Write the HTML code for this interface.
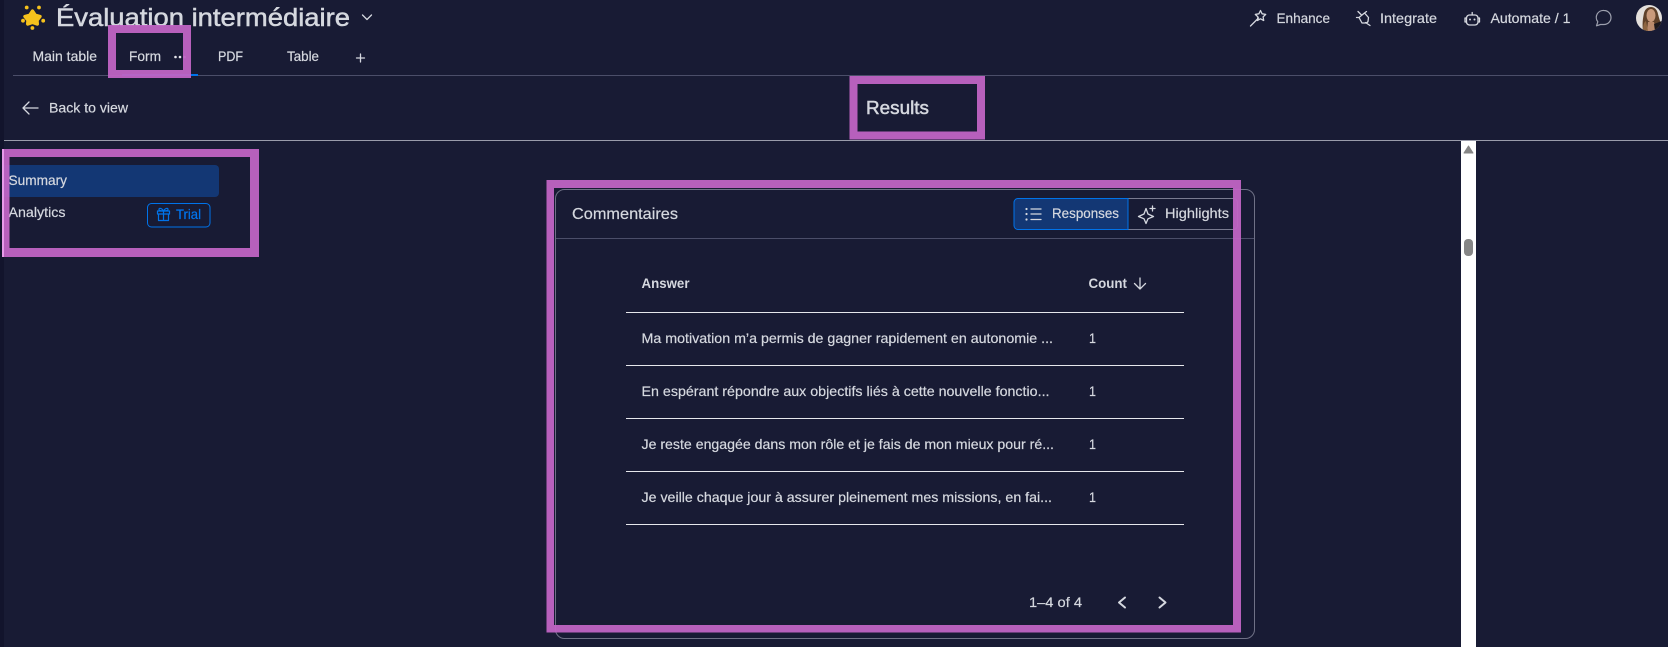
<!DOCTYPE html>
<html lang="fr">
<head>
<meta charset="utf-8">
<title>Results</title>
<style>
html,body{margin:0;padding:0;width:1668px;height:647px;overflow:hidden;background:#181b34}
svg{display:block}
text{font-family:"Liberation Sans",sans-serif;fill:#d5d8df;font-size:14px;stroke:#d5d8df;stroke-width:.2}
.i{fill:none;stroke:#d5d8df;stroke-width:1.3;stroke-linecap:round;stroke-linejoin:round}
.l{fill:#e6e7ec}
.p{fill:#c064c4;opacity:.95;fill-rule:evenodd}
</style>
</head>
<body>
<svg xmlns="http://www.w3.org/2000/svg" width="1668" height="647" viewBox="0 0 1668 647">
<rect width="1668" height="647" fill="#181b34"/>
<rect x="0" y="0" width="4" height="647" fill="#12142c"/>

<!-- star -->
<polygon points="32.5,11 35.3,15.3 40,16.5 37,20.3 37.3,24 32.5,22.4 27.7,24 28,20.3 25,16.5 29.700,15.3" fill="#f6c21c" stroke="#f6c21c" stroke-width="3.4" stroke-linejoin="round"/>
<circle cx="26.7" cy="7.5" r="1.9" fill="#f6c21c"/><circle cx="39" cy="7.5" r="1.9" fill="#f6c21c"/>
<circle cx="23" cy="20.7" r="1.9" fill="#f6c21c"/><circle cx="43.2" cy="20.7" r="1.9" fill="#f6c21c"/><circle cx="32.4" cy="28" r="1.9" fill="#f6c21c"/>

<!-- title -->
<text x="56" y="26" style="font-size:25px;stroke-width:.5" textLength="294" lengthAdjust="spacingAndGlyphs">Évaluation intermédiaire</text>
<path class="i" d="M362.500 15l4.500 4.500 4.500-4.500"/>

<!-- tabs -->
<text x="32.500" y="61" textLength="64.500" lengthAdjust="spacingAndGlyphs">Main table</text>
<text x="129" y="61" textLength="32" lengthAdjust="spacingAndGlyphs">Form</text>
<circle cx="175.500" cy="57" r="1.300" fill="#e6e7ec"/><circle cx="180" cy="57" r="1.300" fill="#e6e7ec"/><circle cx="184.500" cy="57" r="1.300" fill="#e6e7ec"/>
<text x="218" y="61" textLength="25" lengthAdjust="spacingAndGlyphs">PDF</text>
<text x="287" y="61" textLength="32" lengthAdjust="spacingAndGlyphs">Table</text>
<path class="i" d="M356.500 58h8M360.500 54v8"/>
<rect x="13" y="75" width="1655" height="1" fill="#4b4e69"/>
<rect x="122" y="74" width="76" height="2" fill="#0073ea"/>

<!-- right header -->
<path class="i" d="M1250.500 26l8-8M1260.500 10.500l1.600 3.300 3.600.6-2.600 2.500.6 3.600-3.200-1.700-3.200 1.700.6-3.600-2.600-2.500 3.600-.6z"/>
<text x="1276.500" y="23" textLength="53.500" lengthAdjust="spacingAndGlyphs">Enhance</text>
<path class="i" d="M1359 17.500l5.500-4.500 4 4.500-.5 4a3 3 0 0 1-3 1.500h-3zM1366.500 11.500l-2 1.500M1356.500 17.500l2.500 0M1365.500 22.500l4.500 3M1358 11.500l3.500 3.500"/>
<text x="1380" y="23" textLength="57" lengthAdjust="spacingAndGlyphs">Integrate</text>
<rect class="i" x="1466.500" y="15" width="11.500" height="10" rx="3"/>
<path class="i" d="M1472.200 15v-2.500M1466.500 18h-1.500v4h1.500M1478 18h1.500v4h-1.500"/>
<circle cx="1470" cy="19.500" r="1" fill="#d5d8df"/><circle cx="1474.500" cy="19.500" r="1" fill="#d5d8df"/>
<text x="1490.500" y="23" textLength="80" lengthAdjust="spacingAndGlyphs">Automate / 1</text>
<path d="M1604 10.500a7 7 0 0 1 0 14h-3.500l-4 1.300 1.300-4a7 7 0 0 1 6.200-11.300z" fill="none" stroke="#9da0ae" stroke-width="1.200" stroke-linejoin="round"/>

<!-- avatar -->
<defs><clipPath id="av"><circle cx="1649" cy="18" r="13"/></clipPath></defs>
<g clip-path="url(#av)">
<rect x="1636" y="5" width="26" height="26" fill="#e4e0dc"/>
<path d="M1643 31c-1-8 0-13 1-18 1-4 4-6 7-6s6 2 7 7c1 4 2 8 4 11v6z" fill="#5f4129"/>
<ellipse cx="1651" cy="15.500" rx="4.500" ry="6.500" fill="#c99a7b"/>
<path d="M1648 22h6l2 9h-9z" fill="#b98a6c"/>
<path d="M1654 24l8-3v10h-7z" fill="#1c181c"/>
<path d="M1643 31c0-6 1-9 3-10l2 10z" fill="#8d6540"/>
</g>

<!-- back row -->
<path class="i" d="M38 108H23M29 102l-6 6 6 6" stroke-width="1.500"/>
<text x="49" y="112.500" textLength="79" lengthAdjust="spacingAndGlyphs">Back to view</text>
<text x="866" y="114" style="font-size:18px;stroke-width:.5" textLength="63" lengthAdjust="spacingAndGlyphs">Results</text>
<rect x="4" y="140" width="1664" height="1" fill="#9a9cab"/>

<!-- sidebar -->
<path d="M4 165H215a4 4 0 0 1 4 4v24a4 4 0 0 1-4 4H4z" fill="#133774"/>
<text x="8.500" y="185" textLength="58.500" lengthAdjust="spacingAndGlyphs">Summary</text>
<text x="8.500" y="217" textLength="57" lengthAdjust="spacingAndGlyphs">Analytics</text>
<rect x="147.500" y="203.500" width="62.500" height="23.500" rx="4" fill="none" stroke="#0073ea"/>
<g fill="none" stroke="#0073ea" stroke-width="1.200" stroke-linejoin="round" transform="translate(0 -1)">
<rect x="157.500" y="212" width="12" height="3" />
<path d="M158.500 215v6.500h10V215M163.500 212v9.500M163.500 212c-1.500-3-5-3.500-4.500-1.300.3 1.100 2.500 1.300 4.500 1.300zM163.500 212c1.500-3 5-3.500 4.500-1.300-.3 1.100-2.500 1.300-4.500 1.300z"/>
</g>
<text x="176" y="219" style="fill:#0073ea;stroke:#0073ea" textLength="25" lengthAdjust="spacingAndGlyphs">Trial</text>

<!-- card -->
<rect x="555.500" y="189.500" width="699" height="449" rx="9" fill="none" stroke="#6f7186"/>
<rect x="556" y="238" width="698" height="1" fill="#4b4e69"/>
<text x="572" y="219" style="font-size:16px" textLength="106" lengthAdjust="spacingAndGlyphs">Commentaires</text>

<path d="M1128 198.500H1018a4 4 0 0 0-4 4v23a4 4 0 0 0 4 4h110z" fill="#133774" stroke="#0073ea"/>
<path d="M1128 198.500h105.500a4 4 0 0 1 4 4v23a4 4 0 0 1-4 4H1128z" fill="none" stroke="#797b90"/>
<path d="M1128 198v32" stroke="#0073ea"/>
<path class="i" d="M1031 209h10M1031 214h10M1031 219.500h10"/>
<circle cx="1026.500" cy="209" r="1.100" fill="#d5d8df"/><circle cx="1026.500" cy="214" r="1.100" fill="#d5d8df"/><circle cx="1026.500" cy="219.500" r="1.100" fill="#d5d8df"/>
<text x="1052" y="218" textLength="67" lengthAdjust="spacingAndGlyphs">Responses</text>
<path class="i" d="M1146 208.500l2 5.500 5.500 2.500-5.500 2.300-2 4.700-2-4.700-5.500-2.300 5.500-2.500zM1152.500 206v5M1150 208.500h5"/>
<text x="1165" y="218" textLength="64" lengthAdjust="spacingAndGlyphs">Highlights</text>

<!-- table -->
<text x="641.500" y="288" style="font-weight:700;font-size:13.500px;stroke-width:0" textLength="48" lengthAdjust="spacingAndGlyphs">Answer</text>
<text x="1088.500" y="288" style="font-weight:700;font-size:13.500px;stroke-width:0" textLength="38.500" lengthAdjust="spacingAndGlyphs">Count</text>
<path class="i" d="M1140 278v11M1134.500 283.500l5.500 5.500 5.500-5.500" stroke-width="1.200"/>
<rect class="l" x="626" y="312" width="558" height="1"/>
<rect class="l" x="626" y="365" width="558" height="1"/>
<rect class="l" x="626" y="418" width="558" height="1"/>
<rect class="l" x="626" y="471" width="558" height="1"/>
<rect class="l" x="626" y="524" width="558" height="1"/>

<text x="641.500" y="343" textLength="411.500" lengthAdjust="spacingAndGlyphs">Ma motivation m’a permis de gagner rapidement en autonomie ...</text>
<text x="1089" y="343" textLength="7" lengthAdjust="spacingAndGlyphs">1</text>
<text x="641.500" y="396" textLength="408" lengthAdjust="spacingAndGlyphs">En espérant répondre aux objectifs liés à cette nouvelle fonctio...</text>
<text x="1089" y="396" textLength="7" lengthAdjust="spacingAndGlyphs">1</text>
<text x="641.500" y="449" textLength="412.500" lengthAdjust="spacingAndGlyphs">Je reste engagée dans mon rôle et je fais de mon mieux pour ré...</text>
<text x="1089" y="449" textLength="7" lengthAdjust="spacingAndGlyphs">1</text>
<text x="641.500" y="502" textLength="410.500" lengthAdjust="spacingAndGlyphs">Je veille chaque jour à assurer pleinement mes missions, en fai...</text>
<text x="1089" y="502" textLength="7" lengthAdjust="spacingAndGlyphs">1</text>

<text x="1029" y="607" textLength="53" lengthAdjust="spacingAndGlyphs">1–4 of 4</text>
<path class="i" style="stroke-width:2" d="M1125 597.500l-6 5 6 5"/>
<path class="i" style="stroke-width:2" d="M1159.500 597.500l6 5-6 5"/>

<!-- scrollbar -->
<rect x="1461" y="141" width="15" height="506" fill="#ffffff"/>
<path d="M1468.500 146l4.500 7h-9z" fill="#868686" stroke="#868686" stroke-linejoin="round"/>
<rect x="1464" y="239" width="9" height="17" rx="4" fill="#868686"/>

<!-- highlight boxes -->
<path class="p" d="M108 25h83v53h-83zM116 33v37h67v-37z"/>
<path class="p" d="M849.500 76h135.500v63.500h-135.500zM857.500 84v47.500h119.500v-47.500z"/>
<path class="p" d="M4 149h255v108h-255zM9.500 157v91h240.500v-91z"/>
<rect x="2" y="149" width="2" height="108" fill="#e79ae9"/>
<path class="p" d="M546.500 180h694.500v452.500h-694.500zM554 188v437h679v-437z"/>
</svg>
</body>
</html>
